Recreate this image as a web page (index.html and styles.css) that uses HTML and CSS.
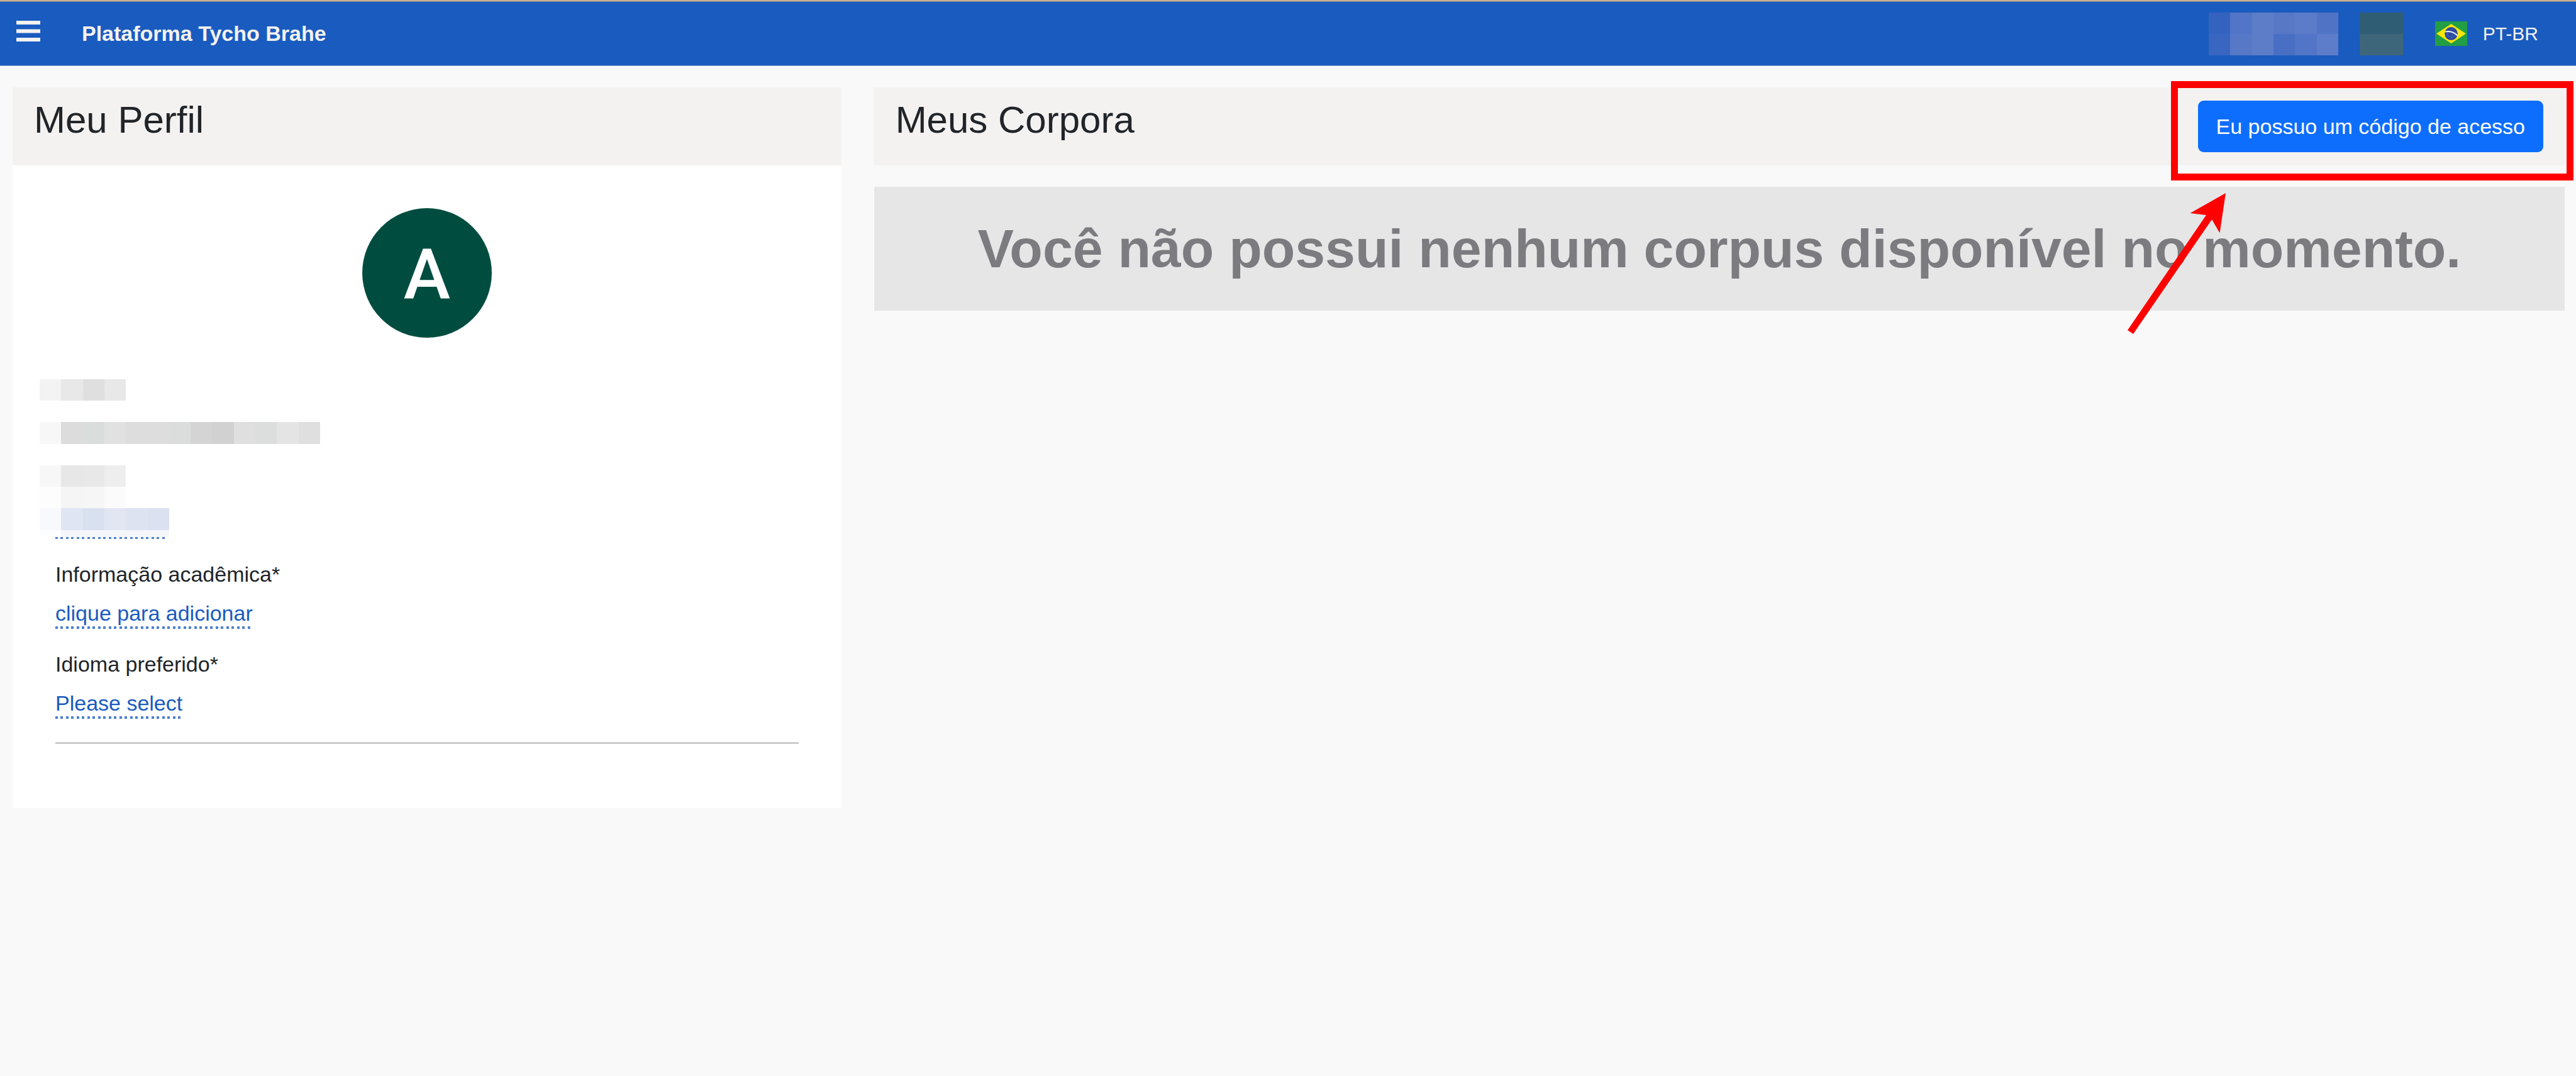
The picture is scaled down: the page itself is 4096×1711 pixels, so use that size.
FILE: index.html
```html
<!DOCTYPE html>
<html lang="pt-BR">
<head>
<meta charset="utf-8">
<meta name="viewport" content="width=device-width, initial-scale=1">
<title>Plataforma Tycho Brahe</title>
<link rel="stylesheet" href="styles.css">
</head>
<body>
<header class="topbar">
  <button class="menu-button" type="button" aria-label="Menu">
    <svg width="38" height="44" viewBox="0 0 38 44" aria-hidden="true"><path d="M0 4h38M0 17.5h38M0 31h38" stroke="#f3f2f0" stroke-width="6"/></svg>
  </button>
  <a class="brand" href="#">Plataforma Tycho Brahe</a>
  <div class="user">
    <svg width="206" height="68" viewBox="0 0 6 2" preserveAspectRatio="none" shape-rendering="crispEdges" aria-hidden="true">
      <path d="M0 0h1v1H0z" fill="#3463bf"/><path d="M1 0h1v1H1z" fill="#5275c7"/><path d="M2 0h1v1H2z" fill="#5e7dc9"/><path d="M3 0h1v1H3z" fill="#5878c6"/><path d="M4 0h1v1H4z" fill="#5c7bc8"/><path d="M5 0h1v1H5z" fill="#5173c6"/>
      <path d="M0 1h1v1H0z" fill="#3966c0"/><path d="M1 1h1v1H1z" fill="#5678c6"/><path d="M2 1h1v1H2z" fill="#5d7dc9"/><path d="M3 1h1v1H3z" fill="#496fc4"/><path d="M4 1h1v1H4z" fill="#5275c7"/><path d="M5 1h1v1H5z" fill="#5d7cc9"/>
    </svg>
    <svg width="69" height="68" viewBox="0 0 2 2" preserveAspectRatio="none" shape-rendering="crispEdges" aria-hidden="true">
      <path d="M0 0h2v1H0z" fill="#2f5d74"/><path d="M0 1h2v1H0z" fill="#3e667a"/>
    </svg>
  </div>
  <a class="language" href="#">
    <svg width="51" height="39" viewBox="0 0 52 39" preserveAspectRatio="none" aria-hidden="true">
      <rect width="52" height="39" fill="#229e45"/>
      <path d="M26 4 50 19.500 26 35 2 19.500z" fill="#f8e509"/>
      <circle cx="26" cy="19.500" r="10.500" fill="#2b49a3"/>
      <path d="M16.500 16.500c7-1.500 14 0.500 19.500 6" fill="none" stroke="#e9f2ee" stroke-width="2"/>
      <path d="M19 22h1M22 24h1M26 26h1M30 24h1M20 19.500h1M27 22h1" stroke="#a9b5da" stroke-width="1"/>
    </svg>
    <span>PT-BR</span>
  </a>
</header>

<main class="dashboard">
  <section class="profile">
    <div class="section-head"><h2>Meu Perfil</h2></div>
    <div class="profile-body">
      <div class="avatar">A</div>
      <svg class="masked" width="446" height="251" viewBox="0 0 13 7.330" preserveAspectRatio="none" shape-rendering="crispEdges" aria-hidden="true">
        <path d="M0 0h1v1H0z" fill="#f3f3f3"/><path d="M1 0h1v1H1z" fill="#e8e8e8"/><path d="M2 0h1v1H2z" fill="#dfdfdf"/><path d="M3 0h1v1H3z" fill="#e8e8e8"/>
        <path d="M0 2h1v1H0z" fill="#f7f7f7"/><path d="M1 2h1v1H1z" fill="#dcdcdc"/><path d="M2 2h1v1H2z" fill="#d9dddb"/><path d="M3 2h1v1H3z" fill="#e1e1e1"/><path d="M4 2h2v1H4z" fill="#dddddd"/><path d="M6 2h1v1H6z" fill="#dadddc"/><path d="M7 2h1v1H7z" fill="#d4d4d4"/><path d="M8 2h1v1H8z" fill="#d1d1d1"/><path d="M9 2h1v1H9z" fill="#dfdfdf"/><path d="M10 2h1v1h-1z" fill="#dbdedd"/><path d="M11 2h1v1h-1z" fill="#e4e4e4"/><path d="M12 2h1v1h-1z" fill="#dfdfdf"/>
        <path d="M0 4h1v1H0z" fill="#f7f7f7"/><path d="M1 4h1v1H1z" fill="#e7e7e7"/><path d="M2 4h1v1H2z" fill="#e8e8e8"/><path d="M3 4h1v1H3z" fill="#eeeeee"/>
        <path d="M0 5h1v1H0z" fill="#fdfdfd"/><path d="M1 5h1v1H1z" fill="#f5f5f5"/><path d="M2 5h1v1H2z" fill="#f6f6f6"/><path d="M3 5h1v1H3z" fill="#fbfbfb"/>
        <path d="M0 6h1v1H0z" fill="#f7f9fd"/><path d="M1 6h1v1H1z" fill="#dfe5f3"/><path d="M2 6h1v1H2z" fill="#d9e0f0"/><path d="M3 6h1v1H3z" fill="#e2e6f3"/><path d="M4 6h1v1H4z" fill="#dde3f1"/><path d="M5 6h1v1H5z" fill="#dbe1f1"/>
        <path d="M0 7h1v1H0z" fill="#fcfeff"/><path d="M1 7h5v1H1z" fill="#f4f6fa"/>
      </svg>
      <div class="details">
        <div class="masked-underline dotted"></div>
        <div class="field">
          <span class="field-label" id="academic">Informação acadêmica*</span>
          <a class="editable dotted" href="#" aria-describedby="academic">clique para adicionar</a>
        </div>
        <div class="field">
          <span class="field-label" id="preferred">Idioma preferido*</span>
          <a class="editable dotted" href="#" aria-describedby="preferred">Please select</a>
        </div>
        <hr class="divider">
      </div>
    </div>
  </section>

  <section class="corpora">
    <div class="section-head">
      <h2>Meus Corpora</h2>
      <button class="access-button" type="button">Eu possuo um código de acesso</button>
      <div class="highlight"></div>
    </div>
    <p class="empty">Você não possui nenhum corpus disponível no momento.</p>
    <svg class="arrow" width="156" height="224" viewBox="0 0 156 224" aria-hidden="true"><path d="M156 0 99.500 32 125 35 0 218l9 6L134 42l12.500 21.500z" fill="#ff0000"/></svg>
  </section>
</main>
</body>
</html>
```
FILE: styles.css
```css
* {
  box-sizing: border-box;
}

body {
  margin: 0;
  background: #f9f9f9;
  color: #212529;
  font: 34px/51px "Liberation Sans", Arial, sans-serif;
}

h2,
p {
  margin: 0;
}

svg {
  display: block;
}

button {
  font: inherit;
  cursor: pointer;
}

/* Top bar */
.topbar {
  display: flex;
  align-items: center;
  height: 105px;
  padding: 1px 60px 0 26px;
  border-top: 2px solid #c4b297;
  border-bottom: 1px solid #84a6dc;
  background: #1a5bbf;
  box-shadow: inset 0 1px #85898f;
  color: #f3f2f0;
}

.menu-button {
  padding: 0;
  border: 0;
  background: none;
}

.brand {
  margin-left: 66px;
  color: inherit;
  font-weight: bold;
  text-decoration: none;
}

.user {
  display: flex;
  gap: 34px;
  margin-left: auto;
}

.language {
  display: flex;
  align-items: center;
  gap: 25px;
  margin-left: 51px;
  color: inherit;
  font-size: 30px;
  text-decoration: none;
}

/* Two columns */
.dashboard {
  display: grid;
  grid-template-columns: calc(33.333% - 35px) 1fr;
  align-items: start;
  gap: 52px;
  padding: 34px 18px 34px 20px;
}

.section-head {
  position: relative;
  display: flex;
  justify-content: space-between;
  align-items: center;
  padding: 0 34px;
  background: #f3f2f0;
}

.section-head h2 {
  padding: 16px 0 36px;
  font-size: 60px;
  font-weight: normal;
  line-height: 72px;
}

/* Profile */
.profile {
  background: #ffffff;
}

.profile-body {
  padding: 68px 34px 102px;
}

.avatar {
  width: 206px;
  height: 206px;
  margin: 0 auto 66px;
  padding-top: 3px;
  border-radius: 50%;
  background: #004d40;
  color: #ffffff;
  font-family: Roboto, sans-serif;
  font-size: 112px;
  font-weight: 500;
  line-height: 206px;
  text-align: center;
}

.masked {
  margin-left: 9px;
}

.details {
  padding: 0 34px;
}

.dotted {
  background: repeating-linear-gradient(90deg, #4a7fd0 0 4px, transparent 4px 8px, #4a7fd0 8px 12px, transparent 12px 17px) bottom left / 100% 4px no-repeat;
}

.masked-underline {
  width: 178px;
  height: 3px;
  margin-bottom: 31px;
}

.field {
  display: flex;
  flex-direction: column;
  align-items: flex-start;
  gap: 11px;
  margin-bottom: 31px;
}

.editable {
  color: #1a5bbf;
  line-height: 50px;
  text-decoration: none;
}

.divider {
  height: 3px;
  margin: 37px 0 0;
  border: 0;
  background: #cccccc;
}

/* Corpora */
.corpora {
  position: relative;
  display: flex;
  flex-direction: column;
  gap: 34px;
}

.access-button {
  height: 82px;
  padding: 0 29px;
  border: 0;
  border-radius: 9px;
  background: #0d6efd;
  color: #ffffff;
}

.empty {
  padding: 47px 34px;
  background: #e6e6e6;
  color: #7c7b80;
  font-size: 86px;
  font-weight: bold;
  line-height: 103px;
  text-align: center;
}

/* Annotation over the access button */
.highlight {
  position: absolute;
  top: -10px;
  right: -14px;
  width: 640px;
  height: 158px;
  border: 11px solid #ff0000;
  pointer-events: none;
}

.arrow {
  position: absolute;
  top: 168px;
  right: 539px;
}
```
